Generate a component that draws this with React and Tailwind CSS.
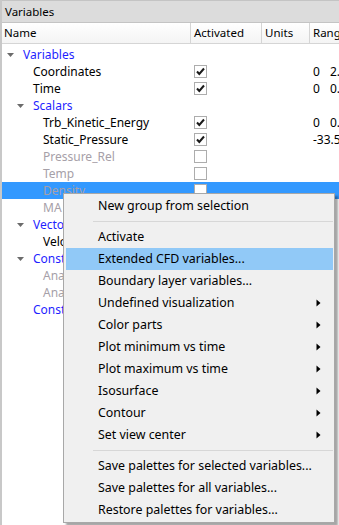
import React from "react";

const rows = [
  { level: 0, label: "Variables", kind: "group", arrow: true },
  { level: 1, label: "Coordinates", kind: "item", check: true, r1: "0", r2: "2." },
  { level: 1, label: "Time", kind: "item", check: true, r1: "0", r2: "0.7" },
  { level: 1, label: "Scalars", kind: "group", arrow: true },
  { level: 2, label: "Trb_Kinetic_Energy", kind: "item", check: true, r1: "0", r2: "0.0" },
  { level: 2, label: "Static_Pressure", kind: "item", check: true, r1: "-33.5" },
  { level: 2, label: "Pressure_Rel", kind: "dim", check: false },
  { level: 2, label: "Temp", kind: "dim", check: false },
  { level: 2, label: "Density", kind: "dim", check: false, selected: true },
  { level: 2, label: "MA", kind: "dim", check: false },
  { level: 1, label: "Vectors", kind: "group", arrow: true },
  { level: 2, label: "Velocity", kind: "item" },
  { level: 1, label: "Constants", kind: "group", arrow: true },
  { level: 2, label: "Analysis_Time", kind: "dim" },
  { level: 2, label: "Analysis_Step", kind: "dim" },
  { level: 1, label: "Constants per part", kind: "group" },
];

const menu = [
  { t: "New group from selection" },
  { sep: true },
  { t: "Activate" },
  { t: "Extended CFD variables...", hi: true },
  { t: "Boundary layer variables..." },
  { t: "Undefined visualization", sub: true },
  { t: "Color parts", sub: true },
  { t: "Plot minimum vs time", sub: true },
  { t: "Plot maximum vs time", sub: true },
  { t: "Isosurface", sub: true },
  { t: "Contour", sub: true },
  { t: "Set view center", sub: true },
  { sep: true },
  { t: "Save palettes for selected variables..." },
  { t: "Save palettes for all variables..." },
  { t: "Restore palettes for variables..." },
];

function Arrow() {
  return (
    <svg width="9" height="6" viewBox="0 0 9 6" className="shrink-0">
      <path d="M1 1 L8 1 L4.5 5 Z" fill="#6b6b6b" />
    </svg>
  );
}

function Check({ on }) {
  return (
    <div className="w-[13px] h-[13px] shrink-0 border border-[#adadad] bg-white flex items-center justify-center">
      {on && (
        <svg width="11" height="11" viewBox="0 0 11 11">
          <path d="M2 5.5 L4.3 8 L9 2.5" stroke="#1a1a1a" strokeWidth="2" fill="none" />
        </svg>
      )}
    </div>
  );
}

function SubArrow() {
  return (
    <svg width="5" height="8" viewBox="0 0 5 8" className="shrink-0">
      <path d="M0.5 0.5 L4.5 4 L0.5 7.5 Z" fill="#000" />
    </svg>
  );
}

export default function App() {
  return (
    <div
      className="relative w-[339px] h-[525px] bg-white overflow-hidden text-[12px] text-black"
      style={{ fontFamily: '"Noto Sans", "Segoe UI", sans-serif' }}
    >
      <div className="flex flex-col h-full border-l-2 border-[#c8c8c8]">
        <div className="h-[23px] bg-[#dcdcdc] border-t border-b border-[#c4c4c4] flex items-center pl-[3px] text-[11.5px] shrink-0">
          Variables
        </div>
        <div className="h-[21px] bg-gradient-to-b from-white to-[#f4f4f4] border-b border-[#d5d5d5] flex items-center text-[11.5px] shrink-0 whitespace-nowrap">
          <div className="w-[189px] shrink-0 pl-[2px] border-r border-[#d5d5d5] h-full flex items-center">Name</div>
          <div className="w-[71px] shrink-0 pl-[3px] border-r border-[#d5d5d5] h-full flex items-center">Activated</div>
          <div className="w-[48px] shrink-0 pl-[3px] border-r border-[#d5d5d5] h-full flex items-center">Units</div>
          <div className="pl-[3px] h-full flex items-center">Range</div>
        </div>
        <div className="flex flex-col pt-[2px]">
          {rows.map((r, i) => (
            <div
              key={i}
              className={`h-[17px] flex items-center whitespace-nowrap ${r.selected ? "bg-[#3399ff]" : ""}`}
            >
              <div className="w-[189px] shrink-0 flex items-center h-full overflow-hidden">
                <div className="flex items-center shrink-0" style={{ paddingLeft: 4 + r.level * 10 }}>
                  <div className="w-[17px] flex items-center">{r.arrow && <Arrow />}</div>
                </div>
                <span
                  className={
                    r.kind === "group"
                      ? "text-[#1f1fff]"
                      : r.kind === "dim"
                      ? "text-[#a6a0a8]"
                      : "text-black"
                  }
                >
                  {r.label}
                </span>
              </div>
              <div className="w-[71px] shrink-0 pl-[3px] flex items-center h-full">
                {r.check !== undefined && <Check on={r.check} />}
              </div>
              <div className="w-[48px] shrink-0" />
              <div className="pl-[3px] flex items-center gap-[10px] text-black shrink-0">
                {r.r1 && <span>{r.r1}</span>}
                {r.r2 && <span>{r.r2}</span>}
              </div>
            </div>
          ))}
        </div>
      </div>

      <div className="absolute left-[63px] top-[193px] w-[272px] bg-[#f0f0f0] border border-[#a8a8a8] shadow-[3px_3px_2px_rgba(0,0,0,0.35)] py-[1px] text-[12.4px]">
        {menu.map((m, i) =>
          m.sep ? (
            <div key={i} className="h-[9px] flex items-center pl-[29px] pr-[1px]">
              <div className="h-px w-full bg-[#d7d7d7]" />
            </div>
          ) : (
            <div
              key={i}
              className={`h-[22px] flex items-center justify-between pl-[32px] pr-[12px] ml-[2px] mr-[1px] ${m.hi ? "bg-[#91c9f7]" : ""}`}
            >
              <span className="whitespace-nowrap">{m.t}</span>
              {m.sub && <SubArrow />}
            </div>
          )
        )}
      </div>
    </div>
  );
}
